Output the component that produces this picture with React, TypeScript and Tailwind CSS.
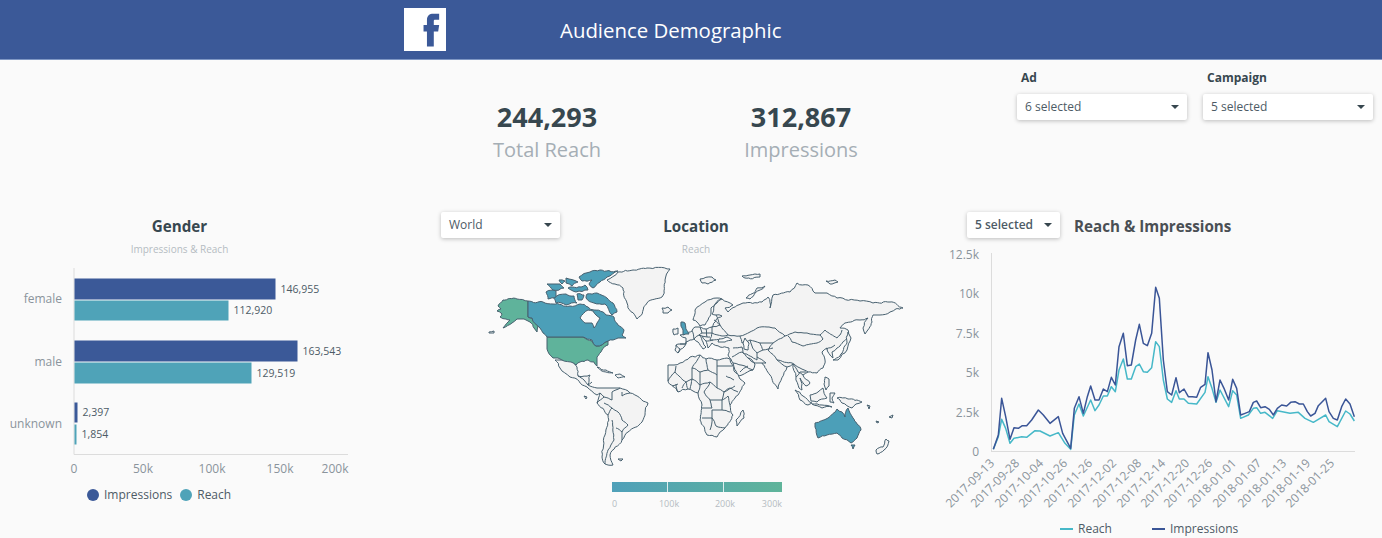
import { useMemo } from "react";

const LAND = [
  // greenland, iceland, svalbard and other northern islands
  "607,280 618,272 633,270 647,268 670,269 665,280 662,297 647,303 637,319 627,303 623,288",
  "662,308 668,307 672,310 668,313 663,313",
  "700,279 712,277 716,280 708,284 702,283",
  "742,276 750,275 760,274 760,277 745,278",
  "746,298 757,288 765,286 755,293 750,299",
  "826,281 835,280 838,282 830,284",
  // scandinavia
  "693,320 695,310 705,302 717,298 722,299 716,303 711,308 711,312 708,320 705,325 700,326 697,322",
  // eurasia
  "722,299 733,305 725,308 728,312 743,303 762,302 768,297 770,308 773,295 790,292 797,283 808,285 815,293 827,293 837,298 860,301 873,303 890,302 903,308 890,312 880,315 873,315 872,322 865,334 863,328 868,318 860,320 845,323 840,328 848,330 847,338 837,348 832,352 833,358 827,348 822,352 825,360 823,368 817,373 808,372 803,375 810,383 806,386 800,378 802,390 799,388 796,377 793,364 787,367 778,389 770,375 762,363 755,363 752,360 748,358 755,364 753,370 742,375 738,376 733,363 728,355 729,348 720,347 712,343 708,348 706,341 702,336 699,335 703,342 706,347 703,349 698,342 694,339 690,340 686,342 684,347 678,353 675,350 676,345 680,344 686,344 686,338 680,335 685,333 692,331 695,327 700,327 707,329 712,327 716,320 722,316 716,315 712,314 714,306 717,303",
  // africa
  "680,363 690,357 700,355 706,359 717,360 727,358 730,359 734,371 740,379 745,383 735,398 730,405 733,415 725,428 717,437 707,435 700,420 702,405 698,393 688,389 678,392 668,381 668,365 674,365",
  // central and south america
  "555,360 570,360 577,367 578,376 590,375 588,385 597,388 600,388 620,388 630,393 648,403 642,422 628,432 622,440 610,455 613,465 605,464 602,457 605,435 608,415 597,403 600,393 597,395 587,387 570,377 560,368",
  // pacific and atlantic islands
  "673,329 678,328 678,334 674,335",
  "597,367 606,370 613,373 606,372",
  "615,375 620,374 625,377 618,378",
  "833,360 840,356 847,343 848,332 851,338 847,350 838,360",
  "825,377 829,379 829,386 826,390 824,384",
  "795,390 803,396 812,403 808,405 800,400",
  "812,404 822,405 832,407 822,408",
  "810,395 818,392 823,388 827,398 817,402 811,401",
  "830,393 835,393 832,398 834,403 830,402",
  "837,398 848,399 862,402 856,404 852,408 842,403",
  "743,410 744,418 737,426 736,420",
  "876,450 883,447 886,439 889,441 884,450 877,454",
  "867,405 870,406 869,409",
  "876,421 879,422 877,423",
  "889,417 893,415 892,418",
  "489,332 494,331 494,333 489,333",
  "584,396 587,397 586,399",
  "618,459 623,459 621,461",
];

const PAINTED = [
  { fill: "#5fb39b", points: "528,301 517,299 503,300 498,306 501,309 497,311 502,314 500,317 506,319 510,320 503,328 512,323 517,319 524,319 530,322 534,328 537,332 538,326 532,318 528,317" },
  { fill: "#5fb39b", points: "547,337 583,337 592,341 596,346 608,341 608,345 602,350 597,357 597,366 594,362 588,360 580,362 576,365 571,362 558,358 553,358 547,349" },
  { fill: "#4c9fb8", points: "528,301 543,302 553,304 570,306 580,304 588,307 594,310 603,312 606,315 614,317 618,325 624,330 622,335 626,338 618,338 613,340 608,341 596,346 592,340 583,337 547,337 540,328 532,318 528,317" },
  // arctic islands
  { fill: "#4c9fb8", points: "579,277 590,272 600,270 618,271 607,277 600,282 593,288 589,284 592,280 582,281" },
  { fill: "#4c9fb8", points: "587,294 597,293 607,298 613,303 617,312 612,315 605,304 594,303 586,298" },
  { fill: "#4c9fb8", points: "553,297 566,294 574,296 577,303 566,305 556,303" },
  { fill: "#4c9fb8", points: "546,292 556,291 556,297 548,299" },
  { fill: "#4c9fb8", points: "547,284 560,284 564,288 553,290" },
  { fill: "#4c9fb8", points: "559,280 565,281 562,284" },
  { fill: "#4c9fb8", points: "566,278 578,282 572,286 566,283" },
  { fill: "#4c9fb8", points: "568,288 585,285 588,290 576,292" },
  { fill: "#4c9fb8", points: "577,294 584,295 582,300 578,300" },
  { fill: "#4c9fb8", points: "681,322 685,323 689,334 683,335 683,330" },
  { fill: "#4c9fb8", points: "815,423 828,418 837,409 842,412 845,417 848,408 853,418 861,430 857,438 851,443 842,438 837,433 827,435 818,438 815,427" },
  { fill: "#4c9fb8", points: "851,445 855,445 853,449" },
];

const WATER = [
  "580,318 588,310 593,311 600,318 597,323 594,328 592,323 585,323",
  "719,339 727,337 732,340 725,342 718,342",
  "745,338 749,343 748,350 744,349 743,343",
];

const BORDERS = [
  // central asia, russia, china
  "720,325 728,335 740,336 750,332 757,328 767,327 775,328 785,336 795,332 807,333 820,335 825,330 837,338 840,335 842,330",
  "788,336 792,342 803,346 817,343 823,339 820,335",
  "740,336 742,343 750,340 760,343 773,343 785,336",
  "773,343 768,350 777,360 792,363 800,368 808,372",
  "742,347 743,353 757,360 757,353 763,350 773,348",
  "757,357 766,363 762,363",
  "732,357 742,352 748,358",
  "733,348 742,347",
  "826,349 835,345",
  "793,364 798,372 803,375",
  "796,377 800,372 806,372",
  "750,340 752,346 757,353",
  "760,343 763,350",
  "777,360 787,367",
  "733,363 745,366 753,370",
  "740,372 748,366",
  // europe
  "716,315 720,325 712,327",
  "712,327 712,333 722,336 728,335",
  "700,327 702,333 712,333",
  "692,331 694,339",
  "702,333 699,335",
  "712,333 710,340 713,340 720,339",
  "702,336 710,337",
  "706,341 713,340",
  "680,344 686,344",
  "676,345 680,349 678,353",
  "714,320 720,325",
  "706,329 707,337",
  "694,339 699,335",
  // africa
  "668,381 675,372 676,366",
  "675,372 686,382 688,389",
  "686,382 692,379 692,368 700,355",
  "692,368 700,372 708,370 706,359",
  "708,370 717,375 717,360",
  "717,366 732,366",
  "717,375 717,388 724,392 735,386",
  "700,372 700,385 698,393",
  "692,379 700,385 710,382 717,388",
  "704,392 710,382",
  "704,392 710,400 712,408 702,408",
  "710,400 722,400 728,396 730,405",
  "722,400 722,410 730,412",
  "702,418 712,418 712,410 722,410",
  "712,418 716,426 725,428",
  "712,418 710,430",
  "724,392 722,400",
  "676,384 678,392",
  "686,382 682,388",
  "672,386 678,384",
  "692,379 690,389",
  "726,376 734,380",
  "724,392 730,388 738,392",
  // south america
  "597,403 604,397 612,400 612,392",
  "600,393 604,397",
  "612,392 620,388",
  "622,392 622,396 630,393",
  "608,415 612,408 618,412 622,420 628,425 622,432",
  "612,408 604,403",
  "612,420 614,440 608,450 605,464",
  "616,428 622,432 622,440",
  "578,376 584,380 588,385",
  "588,385 592,382",
];

const IMPRESSIONS = [[160,748],[175,705],[185,595],[197,650],[210,718],[222,683],[235,685],[247,677],[260,677],[275,660],[295,630],[310,645],[330,670],[355,650],[368,700],[392,745],[403,625],[417,590],[430,640],[442,590],[452,558],[465,600],[477,600],[490,567],[502,575],[514,532],[526,555],[537,440],[550,400],[562,497],[574,495],[587,420],[598,373],[610,430],[622,437],[635,400],[647,262],[658,295],[670,480],[682,575],[695,585],[708,533],[718,578],[732,567],[745,590],[757,590],[770,592],[782,562],[795,553],[804,458],[816,510],[828,605],[840,540],[852,565],[866,600],[878,538],[890,565],[902,645],[915,640],[928,635],[940,607],[950,603],[962,623],[975,620],[988,628],[1000,645],[1012,625],[1025,615],[1040,618],[1052,607],[1065,605],[1078,612],[1090,612],[1102,635],[1112,648],[1125,640],[1135,617],[1157,595],[1167,635],[1180,655],[1192,660],[1205,620],[1217,597],[1230,612],[1243,650]];

const REACH = [[160,748],[175,710],[185,658],[197,685],[210,730],[222,715],[245,710],[260,712],[285,692],[300,693],[330,708],[355,698],[375,730],[392,748],[403,645],[417,612],[430,648],[452,600],[465,632],[477,615],[490,588],[502,588],[514,560],[526,575],[537,510],[550,477],[562,537],[574,537],[587,500],[598,492],[610,515],[622,517],[635,503],[647,425],[658,440],[670,540],[682,597],[695,607],[708,572],[718,597],[732,597],[745,610],[770,612],[795,577],[804,530],[816,565],[828,607],[840,570],[866,620],[878,572],[890,585],[902,655],[925,645],[940,625],[950,623],[962,640],[975,637],[998,655],[1012,632],[1050,640],[1075,637],[1095,655],[1120,667],[1135,658],[1157,645],[1167,665],[1192,680],[1217,633],[1230,642],[1243,663]];

const DATES = [
  { x: 995, label: "2017-09-13" },
  { x: 1020, label: "2017-09-28" },
  { x: 1044, label: "2017-10-04" },
  { x: 1068, label: "2017-10-26" },
  { x: 1093, label: "2017-11-26" },
  { x: 1117, label: "2017-12-02" },
  { x: 1142, label: "2017-12-08" },
  { x: 1166, label: "2017-12-14" },
  { x: 1190, label: "2017-12-20" },
  { x: 1213, label: "2017-12-26" },
  { x: 1237, label: "2018-01-01" },
  { x: 1262, label: "2018-01-07" },
  { x: 1287, label: "2018-01-13" },
  { x: 1311, label: "2018-01-19" },
  { x: 1335, label: "2018-01-25" },
];

const GENDER_BARS = [
  { y: 278.5, h: 21, w: 201, fill: "#3b5998", label: "146,955" },
  { y: 300.5, h: 20, w: 154, fill: "#4fa3b8", label: "112,920" },
  { y: 340.5, h: 21, w: 223, fill: "#3b5998", label: "163,543" },
  { y: 362.5, h: 21, w: 177, fill: "#4fa3b8", label: "129,519" },
  { y: 402.5, h: 20, w: 3, fill: "#3b5998", label: "2,397" },
  { y: 424.5, h: 20, w: 2, fill: "#4fa3b8", label: "1,854" },
];

const toPage = (pts: number[][]) =>
  pts.map(([x, y]) => `${940 + x / 3},${200 + y / 3}`).join(" ");

// coastlines: split long edges with a small offset taken from the edge itself,
// so an edge shared by two shapes bends the same way in both
function wobble(points: string, closed: boolean, amount = 1.3) {
  const pts = points.split(" ").map((p) => p.split(",").map(Number));
  const out: number[][] = [];
  const split = (a: number[], b: number[], depth: number) => {
    const dx = b[0] - a[0];
    const dy = b[1] - a[1];
    const len = Math.hypot(dx, dy);
    if (len < 3.5 || depth > 3 || dx === 0 || dy === 0) return;
    const lo = a[0] + a[1] * 0.7 < b[0] + b[1] * 0.7 ? a : b;
    const hi = lo === a ? b : a;
    const s = Math.sin(lo[0] * 12.9898 + lo[1] * 78.233 + hi[0] * 37.719 + hi[1] * 19.19) * 43758.5453;
    const off = (s - Math.floor(s) - 0.5) * 2 * amount * Math.min(1, len / 10);
    const nx = (hi[1] - lo[1]) / len;
    const ny = (lo[0] - hi[0]) / len;
    const m = [(a[0] + b[0]) / 2 + nx * off, (a[1] + b[1]) / 2 + ny * off];
    split(a, m, depth + 1);
    out.push(m);
    split(m, b, depth + 1);
  };
  pts.forEach((p, i) => {
    out.push(p);
    const next = pts[i + 1] ?? (closed ? pts[0] : null);
    if (next) split(p, next, 0);
  });
  return out.map((p) => `${p[0].toFixed(1)},${p[1].toFixed(1)}`).join(" ");
}

function Select({ label, bold, className }: { label: string; bold?: boolean; className: string }) {
  return (
    <div className={`flex h-[26px] items-center justify-between rounded-[2px] bg-white pl-2 pr-2 text-[12px] text-[#4d5b66] shadow-[0_1px_4px_rgba(0,0,0,0.25)] ${bold ? "font-semibold" : ""} ${className}`}>
      <span>{label}</span>
      <span className="h-0 w-0 border-x-[4px] border-t-[4px] border-x-transparent border-t-[#37474f]" />
    </div>
  );
}

function Kpi({ value, label }: { value: string; label: string }) {
  return (
    <div className="flex w-[254px] flex-col items-center">
      <span className="text-[27px] font-bold leading-[36px] text-[#37474f]">{value}</span>
      <span className="text-[20px] leading-[30px] text-[#a5aeb5]">{label}</span>
    </div>
  );
}

function GenderChart() {
  return (
    <svg width="440" height="225" viewBox="0 262 440 225" className="block">
      <line x1="74" y1="268" x2="74" y2="454.5" stroke="#dcdcdc" />
      <line x1="74" y1="454.5" x2="348" y2="454.5" stroke="#dcdcdc" />
      {GENDER_BARS.map((b) => (
        <g key={b.label}>
          <rect x="74.5" y={b.y} width={b.w} height={b.h} fill={b.fill} />
          <text x={74.5 + b.w + 5} y={b.y + b.h / 2 + 3.5} fontSize="10.5" fill="#4d5b66">{b.label}</text>
        </g>
      ))}
      <g fontSize="12" fill="#8a949c" textAnchor="end">
        <text x="62" y="303">female</text>
        <text x="62" y="366">male</text>
        <text x="62" y="428">unknown</text>
      </g>
      <g fontSize="12" fill="#8a949c" textAnchor="middle">
        <text x="74" y="473">0</text>
        <text x="143" y="473">50k</text>
        <text x="212" y="473">100k</text>
        <text x="280" y="473">150k</text>
        <text x="335" y="473">200k</text>
      </g>
    </svg>
  );
}

function WorldMap() {
  const land = useMemo(() => LAND.map((p) => wobble(p, true)), []);
  const painted = useMemo(() => PAINTED.map((s) => ({ fill: s.fill, points: wobble(s.points, true) })), []);
  const water = useMemo(() => WATER.map((p) => wobble(p, true, 0.8)), []);
  const borders = useMemo(() => BORDERS.map((p) => wobble(p, false, 0.8)), []);
  return (
    <svg width="425" height="208" viewBox="485 262 425 208" className="ml-[45px] block">
      <g stroke="#47606f" strokeWidth="1" strokeLinejoin="round" fill="none">
        {land.map((p) => (
          <polygon key={p} points={p} fill="#f3f3f3" />
        ))}
        {borders.map((p) => (
          <polyline key={p} points={p} />
        ))}
        {painted.map((s) => (
          <polygon key={s.points} points={s.points} fill={s.fill} />
        ))}
        {water.map((p) => (
          <polygon key={p} points={p} fill="#fafafa" />
        ))}
      </g>
    </svg>
  );
}

function LineChart() {
  const ticks = [
    { y: 254, label: "12.5k" },
    { y: 293, label: "10k" },
    { y: 333, label: "7.5k" },
    { y: 372, label: "5k" },
    { y: 412, label: "2.5k" },
    { y: 451.5, label: "0" },
  ];
  return (
    <svg width="431" height="276" viewBox="951 245 431 276" className="block overflow-visible">
      <line x1="991.5" y1="253" x2="991.5" y2="452" stroke="#dcdcdc" />
      <line x1="991" y1="451.5" x2="1355" y2="451.5" stroke="#dcdcdc" />
      <g fontSize="12" fill="#8a949c" textAnchor="end">
        {ticks.map((t) => (
          <text key={t.label} x="979" y={t.y + 4.5}>{t.label}</text>
        ))}
        {DATES.map((d) => (
          <text key={d.label} x={d.x} y="464" transform={`rotate(-45 ${d.x} 464)`}>{d.label}</text>
        ))}
      </g>
      <polyline points={toPage(REACH)} fill="none" stroke="#46b8c8" strokeWidth="1.5" strokeLinejoin="round" />
      <polyline points={toPage(IMPRESSIONS)} fill="none" stroke="#3a5597" strokeWidth="1.5" strokeLinejoin="round" />
    </svg>
  );
}

export default function App() {
  return (
    <div className="h-[538px] w-[1382px] overflow-hidden bg-[#fafafa] font-['Open_Sans',sans-serif]">
      <header className="flex h-[60px] items-center border-b border-[#7f97c4] bg-[#3b5998] pl-[404px]">
        <div className="flex h-[43px] w-[42px] items-center justify-center bg-white">
          <svg width="42" height="43" viewBox="0 0 43 43">
            <path d="M23.5 39V23.5H20V17h3.500v-5c0-4.500 2.500-6.500 6.500-6.500h6v6h-4c-1.200 0-1.500.5-1.500 1.500v4h5.500l-1 6.500h-4.500V39z" fill="#3b5998" />
          </svg>
        </div>
        <h1 className="ml-[114px] pt-[2px] text-[20.4px] text-white">Audience Demographic</h1>
      </header>

      <div className="flex h-[152px]">
        <div className="ml-[420px] flex pt-[39px]">
          <Kpi value="244,293" label="Total Reach" />
          <Kpi value="312,867" label="Impressions" />
        </div>
        <div className="ml-[89px] flex gap-4 pt-[8px]">
          <div className="w-[170px]">
            <div className="mb-[6px] pl-1 text-[12px] font-bold leading-[20px] text-[#37474f]">Ad</div>
            <Select label="6 selected" className="w-[170px]" />
          </div>
          <div className="w-[170px]">
            <div className="mb-[6px] pl-1 text-[12px] font-bold leading-[20px] text-[#37474f]">Campaign</div>
            <Select label="5 selected" className="w-[170px]" />
          </div>
        </div>
      </div>

      <div className="flex">
        <section className="w-[440px]">
          <div className="flex h-[50px] w-[359px] flex-col items-center">
            <h2 className="h-[28px] text-[15.2px] font-bold leading-[28px] text-[#37474f]">Gender</h2>
            <p className="text-[10px] leading-[18px] text-[#b5bcc2]">Impressions &amp; Reach</p>
          </div>
          <GenderChart />
          <div className="-mt-[1px] flex items-center pl-[87px] text-[12px] text-[#4d5b66]">
            <span className="mr-[5px] h-3 w-3 rounded-full bg-[#3b5998]" />
            <span>Impressions</span>
            <span className="ml-2 mr-[5px] h-3 w-3 rounded-full bg-[#4fa3b8]" />
            <span>Reach</span>
          </div>
        </section>

        <section className="w-[511px]">
          <div className="grid h-[50px] grid-cols-[1fr_auto_1fr] pl-[1px]">
            <Select label="World" className="w-[119px]" />
            <div className="flex flex-col items-center">
              <h2 className="h-[28px] text-[15.2px] font-bold leading-[28px] text-[#37474f]">Location</h2>
              <p className="text-[10px] leading-[18px] text-[#b5bcc2]">Reach</p>
            </div>
          </div>
          <WorldMap />
          <div className="ml-[172px] mt-[12px] w-[170px]">
            <div className="flex h-[10px] bg-[linear-gradient(90deg,#4fa0b9,#5fb49a)]">
              <span className="h-full w-[56px] border-r border-[#dfeeee]" />
              <span className="h-full w-[56px] border-r border-[#dfeeee]" />
            </div>
            <div className="mt-[6px] flex text-[9px] leading-[12px] text-[#b5bcc2]">
              <span className="w-[47px]">0</span>
              <span className="w-[56px]">100k</span>
              <span className="w-[47px]">200k</span>
              <span>300k</span>
            </div>
          </div>
        </section>

        <section className="flex-1">
          <div className="flex h-[33px] pl-[16px]">
            <Select label="5 selected" bold className="w-[93px]" />
            <h2 className="ml-[14px] h-[28px] text-[15.2px] font-bold leading-[28px] text-[#4a4f54]">Reach &amp; Impressions</h2>
          </div>
          <LineChart />
          <div className="flex items-center pl-[109px] text-[12px] leading-[16px] text-[#4d5b66]">
            <span className="mr-[5px] h-[2px] w-[13px] bg-[#46b8c8]" />
            <span className="w-[74px]">Reach</span>
            <span className="mr-[5px] h-[2px] w-[13px] bg-[#3a5597]" />
            <span>Impressions</span>
          </div>
        </section>
      </div>
    </div>
  );
}
